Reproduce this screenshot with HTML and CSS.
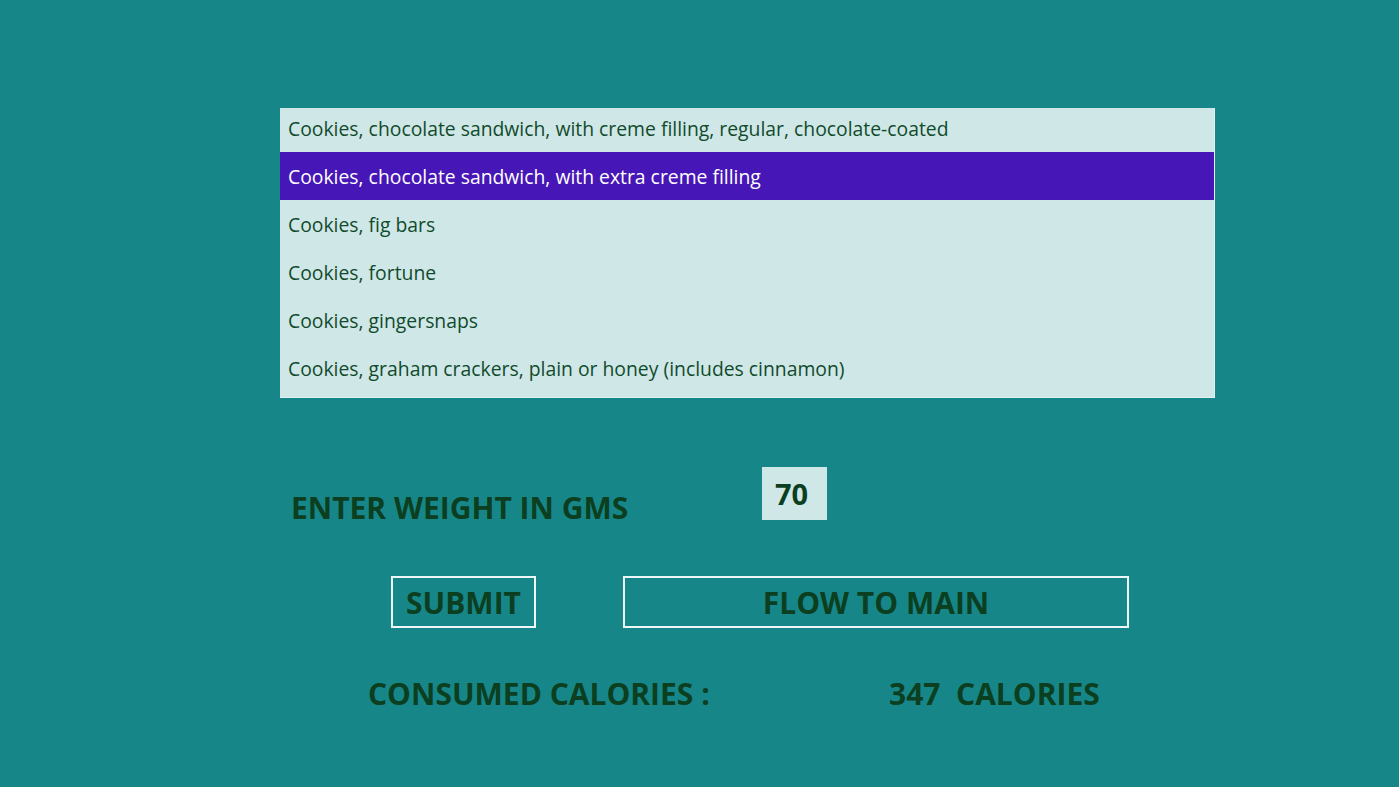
FILE: index.html
```html
<!DOCTYPE html>
<html>
<head>
<meta charset="utf-8">
<link rel="stylesheet" href="styles.css">
</head>
<body>
<div class="page">
  <div class="list">
    <div class="list-inner">
      <div class="item">Cookies, chocolate sandwich, with creme filling, regular, chocolate-coated</div>
      <div class="item selected">Cookies, chocolate sandwich, with extra creme filling</div>
      <div class="item">Cookies, fig bars</div>
      <div class="item">Cookies, fortune</div>
      <div class="item">Cookies, gingersnaps</div>
      <div class="item">Cookies, graham crackers, plain or honey (includes cinnamon)</div>
    </div>
  </div>
  <div class="weight-row">
    <div class="label weight-label">ENTER WEIGHT IN GMS</div>
    <div class="weight-input">70</div>
  </div>
  <div class="button-row">
    <div class="btn submit">SUBMIT</div>
    <div class="btn flow">FLOW TO MAIN</div>
  </div>
  <div class="cal-row">
    <div class="label cal-label">CONSUMED CALORIES :</div>
    <div class="label cal-value">347&nbsp;&nbsp;CALORIES</div>
  </div>
</div>
</body>
</html>
```

FILE: styles.css
```css
html, body {
  margin: 0;
  padding: 0;
}
body {
  background: #178689;
  width: 1399px;
  height: 787px;
  overflow: hidden;
  font-family: "Open Sans", "Noto Sans", sans-serif;
  color: #0b3f1f;
}
.page {
  padding: 108px 0 0 280px;
}
.list {
  width: 935px;
  height: 290px;
  overflow: hidden;
  background: #d0e7e7;
  box-sizing: border-box;
  border-right: 1px solid #e2f1f1;
  border-bottom: 1px solid #e2f1f1;
}
.list-inner {
  margin-top: -4px;
}
.item {
  height: 48px;
  line-height: 50px;
  padding-left: 8px;
  font-size: 19.35px;
  color: #104b2c;
  white-space: nowrap;
}
.item.selected {
  background: #4716b6;
  color: #ffffff;
}
.weight-row {
  display: flex;
  margin-top: 69px;
  height: 53px;
}
.label {
  font-weight: 700;
  font-size: 30px;
  color: #0b3f1f;
  white-space: nowrap;
}
.weight-label {
  margin-left: 11px;
  padding-top: 22px;
  line-height: 38px;
  width: 471px;
}
.weight-input {
  width: 65px;
  height: 53px;
  background: #d0e7e7;
  font-weight: 700;
  font-size: 29px;
  line-height: 53px;
  padding-left: 13px;
  box-sizing: border-box;
}
.button-row {
  display: flex;
  margin-top: 56px;
  height: 52px;
}
.btn {
  box-sizing: border-box;
  height: 52px;
  border: 2px solid #eef7f7;
  font-weight: 700;
  font-size: 30px;
  line-height: 50px;
  text-align: center;
  color: #0b3f1f;
}
.submit {
  margin-left: 111px;
  width: 145px;
}
.flow {
  margin-left: 87px;
  width: 506px;
}
.cal-row {
  display: flex;
  margin-top: 48px;
  line-height: 36px;
}
.cal-label {
  margin-left: 88px;
  width: 521px;
}
```
